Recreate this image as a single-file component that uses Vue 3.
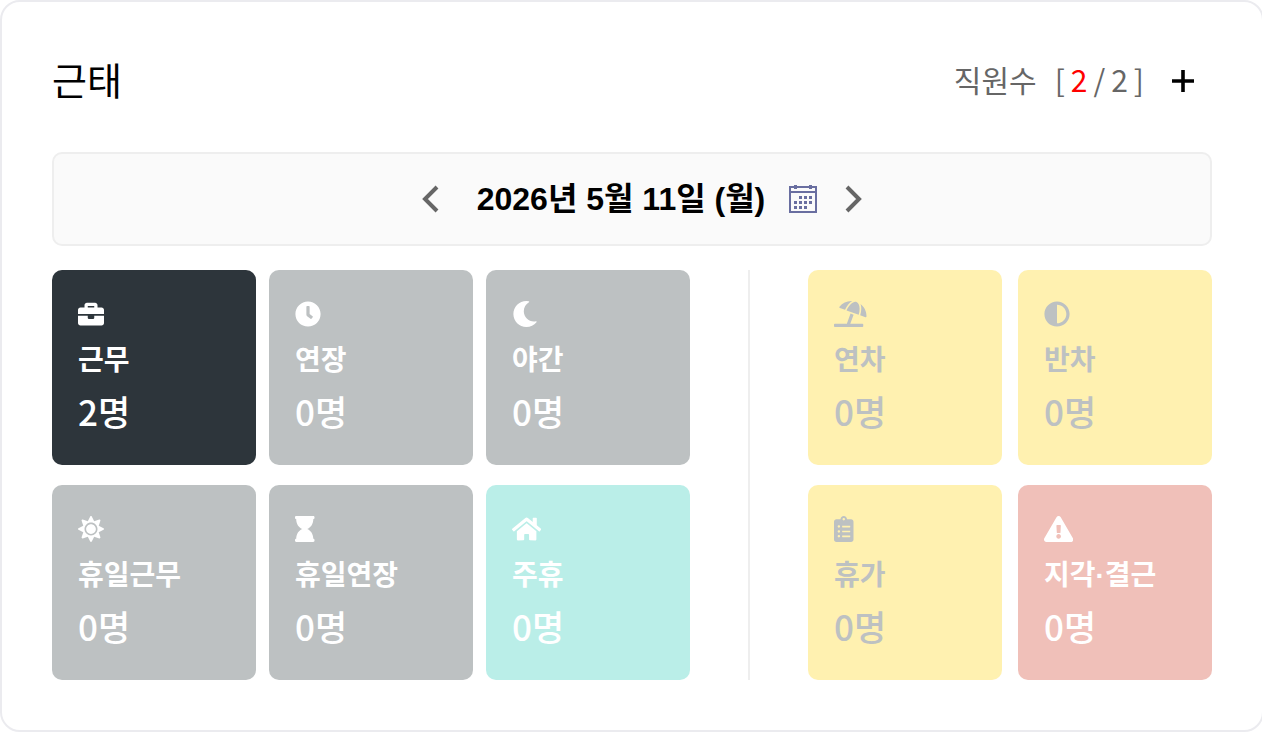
<script setup>
import { ref, computed } from "vue";

const icons = {
  briefcase: {
    width: 512,
    path: "M320 336c0 8.84-7.16 16-16 16h-96c-8.84 0-16-7.16-16-16v-48H0v144c0 25.6 22.4 48 48 48h416c25.6 0 48-22.4 48-48V288H320v48zm144-208h-80V80c0-25.6-22.4-48-48-48H176c-25.6 0-48 22.4-48 48v48H48c-25.6 0-48 22.4-48 48v80h512v-80c0-25.6-22.4-48-48-48zm-144 0H192V96h128v32z",
  },
  clock: {
    width: 512,
    path: "M256,8C119,8,8,119,8,256S119,504,256,504,504,393,504,256,393,8,256,8Zm92.49,313h0l-20,25a16,16,0,0,1-22.49,2.5h0l-67-49.72a40,40,0,0,1-15-31.23V112a16,16,0,0,1,16-16h32a16,16,0,0,1,16,16V256l58,42.5A16,16,0,0,1,348.49,321Z",
  },
  moon: {
    width: 512,
    path: "M283.211 512c78.962 0 151.079-35.925 198.857-94.792 7.068-8.708-.639-21.43-11.562-19.35-124.203 23.654-238.262-71.576-238.262-196.954 0-72.222 38.662-138.635 101.498-174.394 9.686-5.512 7.25-20.197-3.756-22.23A258.156 258.156 0 0 0 283.211 0c-141.309 0-256 114.511-256 256 0 141.309 114.511 256 256 256z",
  },
  sun: {
    width: 512,
    path: "M256 160c-52.9 0-96 43.1-96 96s43.1 96 96 96 96-43.1 96-96-43.1-96-96-96zm246.4 80.5l-94.7-47.3 33.5-100.4c4.5-13.6-8.4-26.5-21.9-21.9l-100.4 33.5-47.4-94.8c-6.4-12.8-24.6-12.8-31 0l-47.3 94.7L92.7 70.8c-13.6-4.5-26.5 8.4-21.9 21.9l33.5 100.4-94.7 47.4c-12.8 6.4-12.8 24.6 0 31l94.7 47.3-33.5 100.5c-4.5 13.6 8.4 26.5 21.9 21.9l100.4-33.5 47.3 94.7c6.4 12.8 24.6 12.8 31 0l47.3-94.7 100.4 33.5c13.6 4.5 26.5-8.4 21.9-21.9l-33.5-100.4 94.7-47.3c13-6.5 13-24.7.2-31.1zm-155.9 106c-49.9 49.9-131.1 49.9-181 0-49.9-49.9-49.9-131.1 0-181 49.9-49.9 131.1-49.9 181 0 49.9 49.9 49.9 131.1 0 181z",
  },
  hourglass: {
    width: 384,
    path: "M360 64c13.255 0 24-10.745 24-24V24c0-13.255-10.745-24-24-24H24C10.745 0 0 10.745 0 24v16c0 13.255 10.745 24 24 24 0 90.965 51.016 167.734 120.842 192C75.016 280.266 24 357.035 24 448c-13.255 0-24 10.745-24 24v16c0 13.255 10.745 24 24 24h336c13.255 0 24-10.745 24-24v-16c0-13.255-10.745-24-24-24 0-90.965-51.016-167.734-120.842-192C308.984 231.734 360 154.965 360 64z",
  },
  home: {
    width: 576,
    path: "M280.37 148.26L96 300.11V464a16 16 0 0 0 16 16l112.06-.29a16 16 0 0 0 15.92-16V368a16 16 0 0 1 16-16h64a16 16 0 0 1 16 16v95.64a16 16 0 0 0 16 16.05L464 480a16 16 0 0 0 16-16V300L295.67 148.26a12.19 12.19 0 0 0-15.3 0zM571.6 251.47L488 182.56V44.05a12 12 0 0 0-12-12h-56a12 12 0 0 0-12 12v72.61L318.47 43a48 48 0 0 0-61 0L4.34 251.47a12 12 0 0 0-1.6 16.9l25.5 31A12 12 0 0 0 45.15 301l235.22-193.74a12.19 12.19 0 0 1 15.3 0L530.9 301a12 12 0 0 0 16.9-1.6l25.5-31a12 12 0 0 0-1.7-16.93z",
  },
  umbrella: {
    width: 640,
    path: "M115.38 136.9l102.11 37.18c35.19-81.54 86.21-144.29 139-173.7-95.88-4.89-188.78 36.96-248.53 111.8-6.69 8.4-2.66 21.05 7.42 24.72zm132.25 48.16l238.48 86.83c35.76-121.38 18.7-231.66-42.63-253.98-7.4-2.7-15.13-4-23.09-4-58.02.01-128.27 69.17-172.76 171.15zM521.48 60.5c6.22 16.3 10.83 34.6 13.2 55.19 5.74 49.89-1.42 108.23-18.95 166.98l102.62 37.36c10.09 3.67 21.31-3.43 21.57-14.17 2.32-95.69-41.91-187.44-118.44-245.36zM560 447.98H321.06L386 269.5l-60.14-21.9-72.9 200.37H16c-8.84 0-16 7.16-16 16.01v32.01C0 504.83 7.16 512 16 512h544c8.84 0 16-7.17 16-16.01v-32.01c0-8.84-7.16-16-16-16z",
  },
  adjust: {
    width: 512,
    path: "M8 256c0 136.966 111.033 248 248 248s248-111.034 248-248S392.966 8 256 8 8 119.033 8 256zm248 184V72c101.705 0 184 82.311 184 184 0 101.705-82.311 184-184 184z",
  },
  clipboard: {
    width: 384,
    path: "M336 64h-80c0-35.3-28.7-64-64-64s-64 28.7-64 64H48C21.5 64 0 85.5 0 112v352c0 26.5 21.5 48 48 48h288c26.5 0 48-21.5 48-48V112c0-26.5-21.5-48-48-48zM96 424c-13.3 0-24-10.7-24-24s10.7-24 24-24 24 10.7 24 24-10.7 24-24 24zm0-96c-13.3 0-24-10.7-24-24s10.7-24 24-24 24 10.7 24 24-10.7 24-24 24zm0-96c-13.3 0-24-10.7-24-24s10.7-24 24-24 24 10.7 24 24-10.7 24-24 24zm96-192c13.3 0 24 10.7 24 24s-10.7 24-24 24-24-10.7-24-24 10.7-24 24-24zm128 368c0 4.4-3.6 8-8 8H168c-4.4 0-8-3.6-8-8v-16c0-4.4 3.6-8 8-8h144c4.4 0 8 3.6 8 8v16zm0-96c0 4.4-3.6 8-8 8H168c-4.4 0-8-3.6-8-8v-16c0-4.4 3.6-8 8-8h144c4.4 0 8 3.6 8 8v16zm0-96c0 4.4-3.6 8-8 8H168c-4.4 0-8-3.6-8-8v-16c0-4.4 3.6-8 8-8h144c4.4 0 8 3.6 8 8v16z",
  },
  warning: {
    width: 576,
    path: "M569.517 440.013C587.975 472.007 564.806 512 527.94 512H48.054c-36.937 0-59.999-40.055-41.577-71.987L246.423 23.985c18.467-32.009 64.72-31.951 83.154 0l239.94 416.028zM288 354c-25.405 0-46 20.595-46 46s20.595 46 46 46 46-20.595 46-46-20.595-46-46-46zm-43.673-165.346l7.418 136c.347 6.364 5.609 11.346 11.982 11.346h48.546c6.373 0 11.635-4.982 11.982-11.346l7.418-136c.375-6.874-5.098-12.654-11.982-12.654h-63.383c-6.884 0-12.356 5.78-11.981 12.654z",
  },
};

const groups = [
  {
    name: "work",
    items: [
      { label: "근무", count: 2, icon: "briefcase", color: "dark" },
      { label: "연장", count: 0, icon: "clock", color: "gray" },
      { label: "야간", count: 0, icon: "moon", color: "gray" },
      { label: "휴일근무", count: 0, icon: "sun", color: "gray" },
      { label: "휴일연장", count: 0, icon: "hourglass", color: "gray" },
      { label: "주휴", count: 0, icon: "home", color: "mint" },
    ],
  },
  {
    name: "leave",
    items: [
      { label: "연차", count: 0, icon: "umbrella", color: "yellow" },
      { label: "반차", count: 0, icon: "adjust", color: "yellow" },
      { label: "휴가", count: 0, icon: "clipboard", color: "yellow" },
      { label: "지각·결근", count: 0, icon: "warning", color: "red" },
    ],
  },
];

const present = ref(2);
const total = ref(2);

const date = ref(new Date(2026, 4, 11));
const days = ["일", "월", "화", "수", "목", "금", "토"];

const dateText = computed(() => {
  const d = date.value;
  return `${d.getFullYear()}년 ${d.getMonth() + 1}월 ${d.getDate()}일 (${days[d.getDay()]})`;
});

const moveDay = (step) => {
  const d = new Date(date.value);
  d.setDate(d.getDate() + step);
  date.value = d;
};
</script>

<template>
  <div class="page">
    <section class="card">
      <header class="card-header">
        <h2>근태</h2>
        <div class="staff">
          <span class="staff-text">직원수</span>
          <span class="staff-text staff-count">
            <span>[</span>
            <span class="present">{{ present }}</span>
            <span>/</span>
            <span>{{ total }}</span>
            <span>]</span>
          </span>
          <button class="add" aria-label="추가">
            <svg width="22" height="22" viewBox="0 0 22 22">
              <path d="M11 0v22M0 11h22" stroke="#000" stroke-width="3.6" />
            </svg>
          </button>
        </div>
      </header>

      <div class="date-bar">
        <button aria-label="이전 날짜" @click="moveDay(-1)">
          <svg width="18" height="28" viewBox="0 0 18 28">
            <path d="M16 2L4 14l12 12" fill="none" stroke="#666" stroke-width="4" />
          </svg>
        </button>
        <span class="date">{{ dateText }}</span>
        <button class="calendar" aria-label="달력">
          <svg width="28" height="30" viewBox="0 0 28 30">
            <path d="M1 3h26v25H1zM1 8h26" fill="none" stroke="#696ea0" stroke-width="2" />
            <path d="M5 1h3v4H5zM20 1h3v4h-3z" fill="#696ea0" />
            <path
              d="M10 13.5h14M5 18.5h19M5 23.5h14"
              stroke="#696ea0"
              stroke-width="3"
              stroke-dasharray="3 2"
            />
          </svg>
        </button>
        <button aria-label="다음 날짜" @click="moveDay(1)">
          <svg width="18" height="28" viewBox="0 0 18 28">
            <path d="M2 2l12 12L2 26" fill="none" stroke="#666" stroke-width="4" />
          </svg>
        </button>
      </div>

      <div class="board">
        <div v-for="group in groups" :key="group.name" class="group" :class="group.name">
          <button
            v-for="item in group.items"
            :key="item.label"
            class="tile"
            :class="item.color"
          >
            <svg class="icon" :viewBox="`0 0 ${icons[item.icon].width} 512`">
              <path :d="icons[item.icon].path" />
            </svg>
            <span class="label">{{ item.label }}</span>
            <span class="count">{{ item.count }}명</span>
          </button>
        </div>
      </div>
    </section>
  </div>
</template>

<style>
body {
  background-color: white;
}
</style>

<style scoped>
.page {
  overflow: hidden;
  font-family: "Noto Sans CJK KR", sans-serif;
}

.card {
  margin-right: -2px;
  padding: 50px;
  border: 2px solid #ebebef;
  border-radius: 20px;
}

button {
  padding: 0;
  border: none;
  background: none;
  font-family: inherit;
  cursor: pointer;
}

svg {
  display: block;
}

.card-header {
  display: flex;
  justify-content: space-between;
  align-items: center;
  height: 58px;
  margin-bottom: 42px;
  padding-right: 18px;
}

h2 {
  margin: 0;
  padding-bottom: 4px;
  font-size: 38px;
  line-height: 54px;
  font-weight: 400;
}

.staff {
  display: flex;
  align-items: center;
  color: #666;
  font-size: 30px;
  line-height: 54px;
}

.staff-text {
  padding-bottom: 4px;
}

.staff-count {
  display: flex;
  gap: 6px;
  margin-left: 18px;
}

.present {
  color: #f00;
}

.add {
  margin-left: 28px;
}

.date-bar {
  display: flex;
  justify-content: center;
  align-items: center;
  height: 90px;
  padding-left: 20px;
  margin-bottom: 24px;
  background-color: #fafafa;
  border: 2px solid #eee;
  border-radius: 10px;
}

.date {
  margin: 0 24px 0 38px;
  font-family: "Liberation Sans", "Noto Sans CJK KR", sans-serif;
  font-size: 32px;
  line-height: 40px;
  font-weight: 700;
}

.calendar {
  margin-right: 28px;
}

.board {
  display: grid;
  grid-template-columns: 698fr 462fr;
}

.group {
  display: grid;
  grid-auto-rows: 195px;
  row-gap: 20px;
}

.work {
  grid-template-columns: repeat(3, 1fr);
  column-gap: 13px;
  padding-right: 58px;
  border-right: 2px solid #eee;
}

.leave {
  grid-template-columns: repeat(2, 1fr);
  column-gap: 16px;
  padding-left: 58px;
}

.tile {
  display: flex;
  flex-direction: column;
  align-items: flex-start;
  justify-content: flex-start;
  padding: 31px 26px 0;
  border-radius: 10px;
  color: white;
  text-align: left;
}

.icon {
  height: 26px;
  fill: currentColor;
}

.label {
  margin-top: 14px;
  font-family: "Liberation Sans", "Noto Sans CJK KR", sans-serif;
  font-size: 28px;
  line-height: 40px;
  font-weight: 700;
}

.count {
  margin-top: 4px;
  font-size: 35px;
  line-height: 52px;
  font-weight: 500;
}

.dark {
  background-color: #2d353b;
}

.gray {
  background-color: #bdc1c2;
}

.mint {
  background-color: #baeee8;
}

.yellow {
  background-color: #fff1b0;
  color: #bdc1c2;
}

.red {
  background-color: #f0c0b9;
}
</style>
